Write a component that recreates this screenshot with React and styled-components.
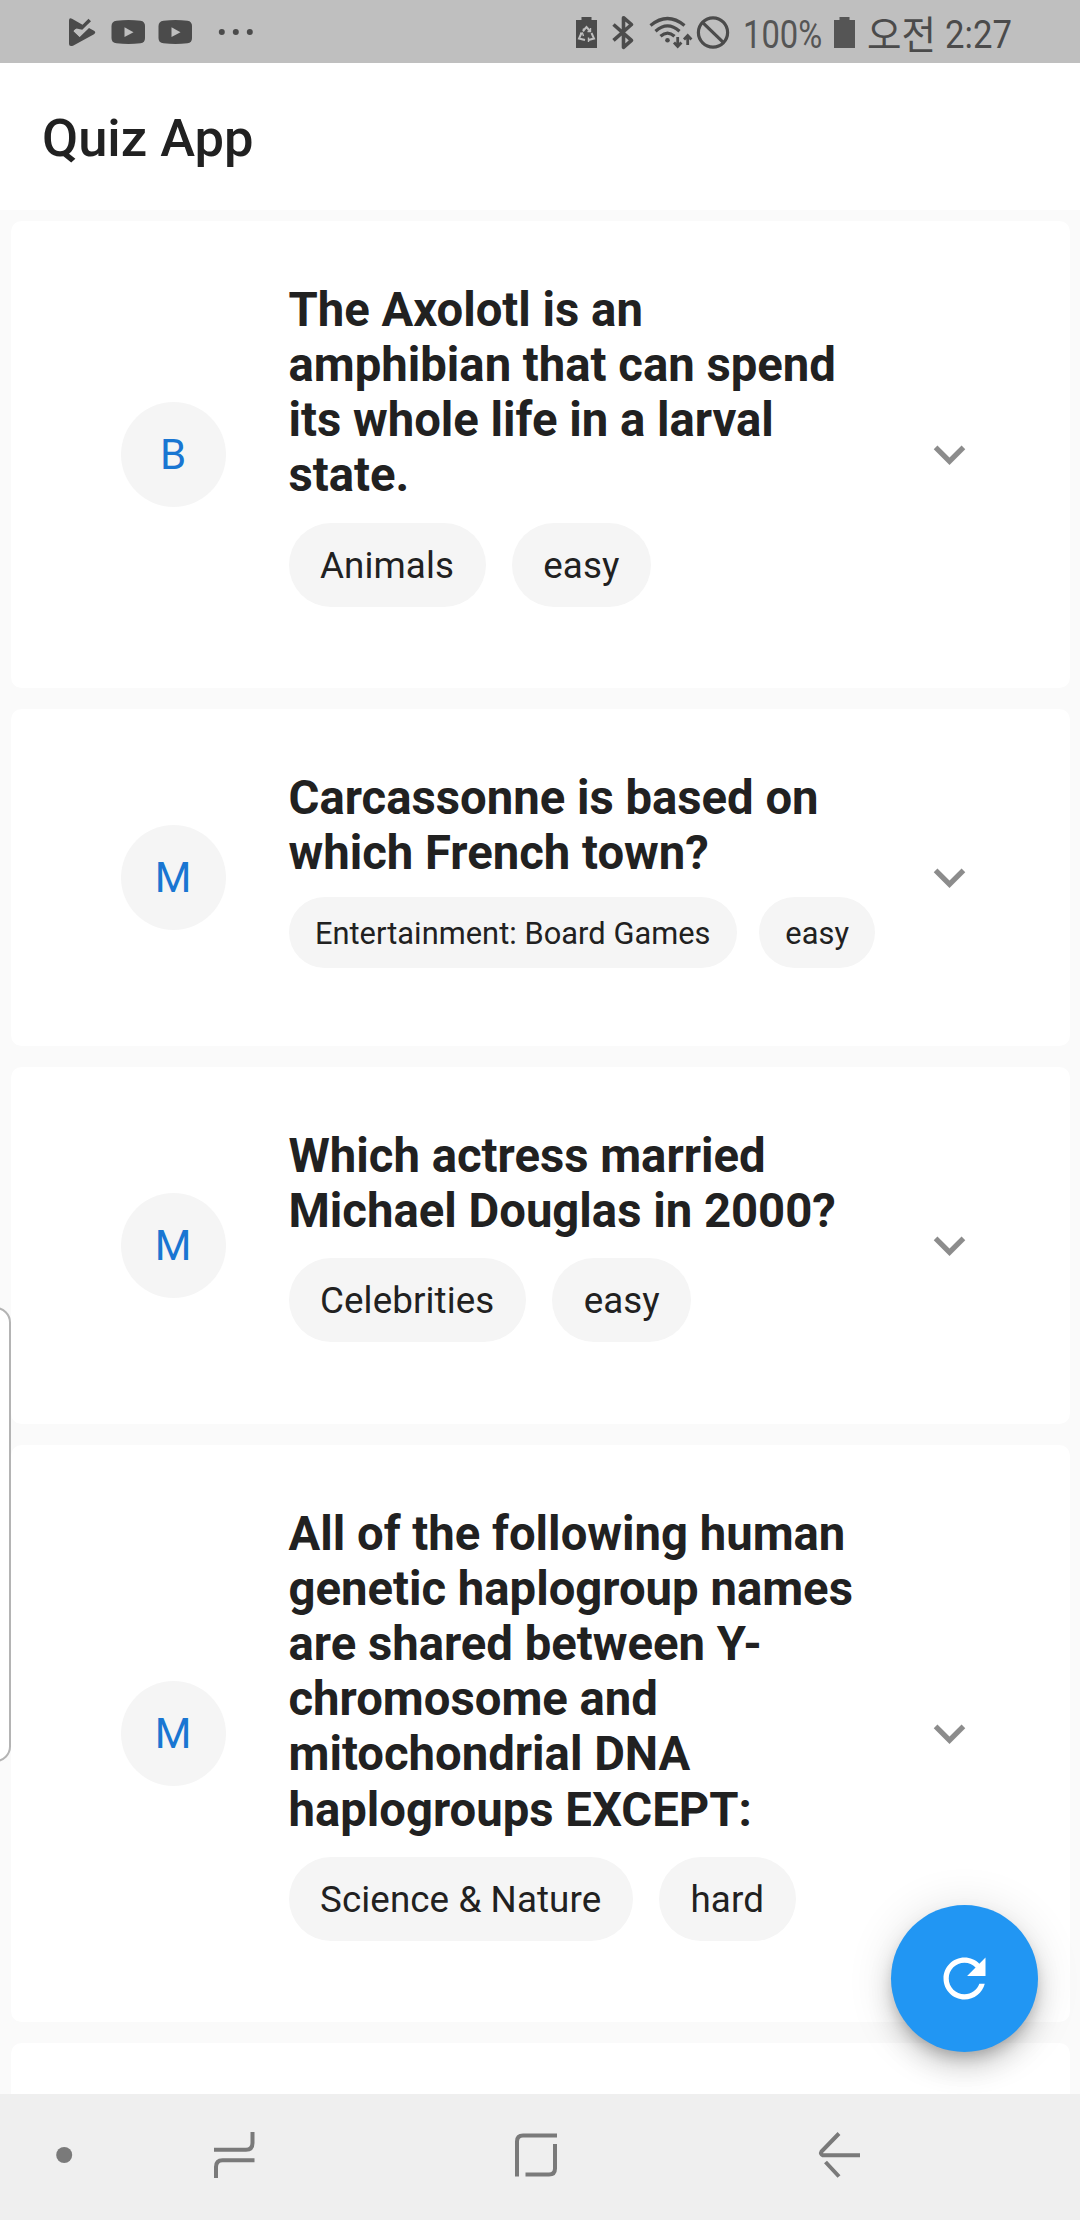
import React from "react";
import styled, { createGlobalStyle } from "styled-components";

const Global = createGlobalStyle`
  *, *::before, *::after { box-sizing: border-box; }
  body { margin: 0; background: #fafafa; }
`;

const Screen = styled.div`
  position: relative;
  width: 1080px;
  height: 2220px;
  display: flex;
  flex-direction: column;
  overflow: hidden;
  background: #fafafa;
  color: #212121;
  font-family: Roboto, "Noto Sans CJK KR", sans-serif;
`;

const StatusBar = styled.header`
  flex: none;
  height: 63px;
  display: flex;
  justify-content: space-between;
  background: #bfbfbf;
  color: #4b4b4b;
`;

const StatusGroup = styled.div`
  display: flex;
  align-items: flex-start;
  padding: 0 ${(p) => p.$end || 0}px 0 ${(p) => p.$start || 0}px;
`;

const StatusLabel = styled.span`
  flex: none;
  width: ${(p) => p.$width}px;
  margin-left: ${(p) => p.$gap || 0}px;
  color: ${(p) => p.$color || "#4b4b4b"};
  font-size: ${(p) => p.$size || 39}px;
  font-weight: 400;
  line-height: 46px;
  padding-top: ${(p) => p.$top || 12}px;
  white-space: nowrap;
  transform: scaleX(${(p) => p.$stretch || 1});
  transform-origin: left;
`;

const AppBar = styled.div`
  flex: none;
  height: 147px;
  display: flex;
  align-items: center;
  padding: 3px 42px 0;
  background: #fff;
`;

const AppTitle = styled.h1`
  margin: 0;
  font-size: 52.5px;
  font-weight: 500;
  line-height: 62px;
`;

const QuestionList = styled.main`
  flex: 1;
  min-height: 0;
  overflow: hidden;
  display: flex;
  flex-direction: column;
  gap: 21px;
  padding: 10.5px;
`;

const Card = styled.article`
  flex: none;
  display: flex;
  align-items: center;
  min-height: 336px;
  padding: 60.5px 100px 60.3px 110px;
  border-radius: 10.5px;
  background: #fff;
`;

const Avatar = styled.div`
  flex: none;
  width: 105px;
  height: 105px;
  display: flex;
  align-items: center;
  justify-content: center;
  border-radius: 50%;
  background: #f5f5f5;
  color: #1976d2;
  font-size: 42px;
`;

const Body = styled.div`
  flex: none;
  width: 587px;
  margin-left: 63px;
`;

const Question = styled.h2`
  margin: 0 0 -1.6px;
  padding-top: 1.6px;
  font-size: 47.25px;
  font-weight: 700;
  line-height: 55.15px;
`;

const Chips = styled.div`
  display: flex;
  align-items: center;
  gap: ${(p) => 26.25 * p.$scale}px;
  height: ${(p) => 126 * p.$scale}px;
`;

const Chip = styled.span`
  flex: none;
  display: flex;
  align-items: center;
  height: ${(p) => 84 * p.$scale}px;
  padding: 1px ${(p) => 31.5 * p.$scale}px 0;
  border-radius: 42px;
  background: #f5f5f5;
  font-size: ${(p) => 36.75 * p.$scale}px;
  letter-spacing: ${(p) => (p.$scale < 1 ? 0.05 : 0.1)}px;
  white-space: nowrap;
`;

const Chevron = styled.svg`
  flex: none;
  width: 63px;
  height: 63px;
  margin-left: 42px;
  fill: #8c8c8c;
`;

const Fab = styled.button`
  position: absolute;
  right: 42px;
  bottom: 168px;
  width: 147px;
  height: 147px;
  display: flex;
  align-items: center;
  justify-content: center;
  padding: 0;
  border: 0;
  border-radius: 50%;
  background: #2196f3;
  box-shadow: 0 8px 13px -3px rgba(0, 0, 0, 0.2), 0 16px 26px rgba(0, 0, 0, 0.14),
    0 3px 47px rgba(0, 0, 0, 0.12);
`;

const EdgeHandle = styled.div`
  position: absolute;
  left: -20px;
  top: 1307px;
  width: 31px;
  height: 455px;
  border: 2px solid #b4b4b4;
  border-radius: 16px;
  background: #fff;
`;

const NavBar = styled.nav`
  position: relative;
  flex: none;
  height: 126px;
  display: flex;
  align-items: center;
  background: #efefef;
`;

const NavIcon = styled.svg`
  flex: none;
  width: 60px;
  height: 60px;
  margin-left: ${(p) => p.$gap}px;
  fill: none;
  stroke: #7a7a7a;
  stroke-width: 4;
`;

const questions = [
  {
    kind: "B",
    text: "The Axolotl is an amphibian that can spend its whole life in a larval state.",
    tags: ["Animals", "easy"],
  },
  {
    kind: "M",
    text: "Carcassonne is based on which French town?",
    tags: ["Entertainment: Board Games", "easy"],
    scale: 0.838,
  },
  {
    kind: "M",
    text: "Which actress married Michael Douglas in 2000?",
    tags: ["Celebrities", "easy"],
  },
  {
    kind: "M",
    text: "All of the following human genetic haplogroup names are shared between Y-chromosome and mitochondrial DNA haplogroups EXCEPT:",
    tags: ["Science & Nature", "hard"],
  },
];

function QuestionCard({ kind, text, tags, scale = 1 }) {
  return (
    <Card>
      <Avatar>{kind}</Avatar>
      <Body>
        <Question>{text}</Question>
        <Chips $scale={scale}>
          {tags.map((tag) => (
            <Chip key={tag} $scale={scale}>
              {tag}
            </Chip>
          ))}
        </Chips>
      </Body>
      <Chevron viewBox="0 0 24 24">
        <path d="M16.59 8.59L12 13.17 7.41 8.59 6 10l6 6 6-6z" />
      </Chevron>
    </Card>
  );
}

function NotificationIcons() {
  return (
    <svg width="200" height="63" viewBox="60 0 200 63" fill="#4b4b4b">
      <path d="M69 20.500Q69 17.500 72 18.700L82.500 24.800 88.500 18.700 91 21.200 82.300 29.800 76.500 28.500 73.500 31.300 79.700 37 89 28 94 30.800Q96.500 32.500 94 34.200L73 45.700Q69 47 69 44Z" />
      <path d="M74.600 29.800L79.500 34.800 88.700 25.700" fill="none" stroke="#bfbfbf" strokeWidth="2.600" />
      {[111.5, 158.5].map((x) => (
        <g key={x}>
          <path d={`M${x + 5} 20.800Q${x + 17} 19.300 ${x + 29} 20.800 ${x + 33.5} 21.500 ${x + 33.5} 26V38Q${x + 33.5} 42.700 ${x + 29} 43.300 ${x + 17} 44.700 ${x + 5} 43.300 ${x} 42.700 ${x} 38V26Q${x} 21.500 ${x + 5} 20.800Z`} />
          <path d={`M${x + 13} 27.200L${x + 22} 32.200 ${x + 13} 37Z`} fill="#bfbfbf" />
        </g>
      ))}
      <circle cx="221.800" cy="32" r="3" />
      <circle cx="235.800" cy="32" r="3" />
      <circle cx="249.800" cy="32" r="3" />
    </svg>
  );
}

function SystemIcons() {
  return (
    <svg width="160" height="63" viewBox="570 0 160 63" fill="none" stroke="#4b4b4b">
      <path d="M576 20H581.500V17H591.500V20H597V48H576Z" fill="#4b4b4b" stroke="none" />
      <g stroke="#bfbfbf" strokeWidth="2">
        <path d="M583 31L586.500 27 590 31M591.500 33L594 38.500 588.500 40M585 40L579 38.500 581.500 33" />
        <path d="M583.500 31.500V28.500M590.500 28V31.500H587.500M588.500 37.500V42M580 33.500L582.500 33 583.500 36" strokeWidth="1.400" />
      </g>
      <path d="M613.500 24.500L631.500 40.300 623.500 47.300V17.700L631.500 24.500 613.500 40.300" strokeWidth="3.600" strokeLinejoin="round" />
      <path d="M650.500 25.500Q667.500 11.500 684.500 25.500M655.500 31.300Q667.500 20.500 679.500 31.300M660.500 36.300Q667.500 30 674.500 36.300" strokeWidth="3.200" />
      <circle cx="667.500" cy="40.300" r="2.300" fill="#4b4b4b" stroke="none" />
      <path d="M677.700 37V46.500M674 42.500L677.700 46.500 681.400 42.500M687.700 45V35.500M684 39.500L687.700 35.500 691.400 39.500" strokeWidth="2.800" />
      <circle cx="713" cy="32.500" r="14.600" strokeWidth="3.200" />
      <path d="M702.500 22.300L723.500 42.700" strokeWidth="3.200" />
    </svg>
  );
}

export default function App() {
  return (
    <>
      <Global />
      <Screen>
        <StatusBar>
          <StatusGroup $start={60}>
            <NotificationIcons />
          </StatusGroup>
          <StatusGroup $end={69}>
            <SystemIcons />
            <StatusLabel $width={79} $gap={13} $stretch={0.84} $color="#555">100%</StatusLabel>
            <svg width="45" height="63" viewBox="822 0 45 63">
              <path d="M834 20H839.500V17H849.500V20H855V48H834Z" fill="#555" />
            </svg>
            <StatusLabel $width={78} $size={39} $top={13} $stretch={0.96}>오전</StatusLabel>
            <StatusLabel $width={66} $stretch={0.89}>2:27</StatusLabel>
          </StatusGroup>
        </StatusBar>
        <AppBar>
          <AppTitle>Quiz App</AppTitle>
        </AppBar>
        <QuestionList>
          {questions.map((q) => (
            <QuestionCard key={q.text} {...q} />
          ))}
          <Card />
        </QuestionList>
        <NavBar>
          <NavIcon $gap={34} viewBox="34 2127 60 60">
            <circle cx="64.200" cy="2155" r="8" fill="#7a7a7a" stroke="none" />
          </NavIcon>
          <NavIcon $gap={110} viewBox="204 2127 60 60">
            <path d="M214 2149.700H246Q252.500 2149.700 252.500 2143V2132M254.500 2160.300H222.500Q216 2160.300 216 2167V2178" />
          </NavIcon>
          <NavIcon $gap={242} viewBox="506 2127 60 60">
            <path d="M557 2135.500H523Q517 2135.500 517 2141.500V2176.500M555 2144V2168.500Q555 2174.500 549 2174.500H525.500" />
          </NavIcon>
          <NavIcon $gap={244} viewBox="810 2127 60 60">
            <path d="M860 2155.300H823Q820 2154 821.500 2151.500L839 2133.500M825.500 2162L839 2176.500" />
          </NavIcon>
        </NavBar>
        <EdgeHandle />
        <Fab aria-label="Refresh">
          <svg width="63" height="63" viewBox="0 0 24 24" fill="#fff">
            <path d="M17.650 6.350C16.200 4.900 14.210 4 12 4c-4.420 0-7.990 3.580-7.990 8s3.570 8 7.990 8c3.730 0 6.840-2.550 7.730-6h-2.080c-.82 2.330-3.040 4-5.650 4-3.310 0-6-2.690-6-6s2.690-6 6-6c1.660 0 3.140.69 4.220 1.780L13 11h7V4l-2.350 2.350z" />
          </svg>
        </Fab>
      </Screen>
    </>
  );
}
